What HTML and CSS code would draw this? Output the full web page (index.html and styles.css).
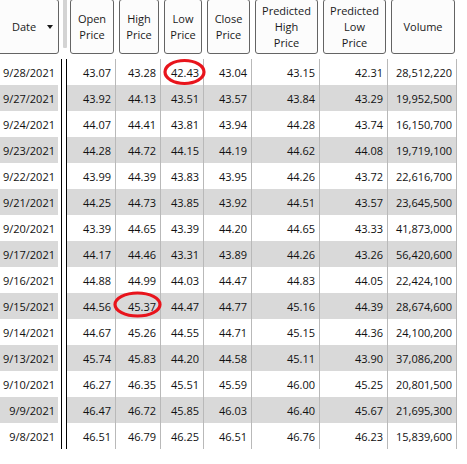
FILE: index.html
```html
<!DOCTYPE html>
<html>
<head>
<meta charset="utf-8">
<link rel="stylesheet" href="styles.css">
</head>
<body>
<div class="grid">
  <div class="header">
    <div class="hcell date-h"><div class="btn date-btn"><span>Date</span><span class="tri"></span></div></div>
    <div class="hcell split-h"><div class="splitter"></div></div>
    <div class="hcell"><div class="btn">Open<br>Price</div></div>
    <div class="hcell"><div class="btn">High<br>Price</div></div>
    <div class="hcell"><div class="btn">Low<br>Price</div></div>
    <div class="hcell"><div class="btn">Close<br>Price</div></div>
    <div class="hcell"><div class="btn">Predicted<br>High<br>Price</div></div>
    <div class="hcell"><div class="btn">Predicted<br>Low<br>Price</div></div>
    <div class="hcell"><div class="btn">Volume</div></div>
  </div>
  <div class="body">
    <div class="row"><div class="c d">9/28/2021</div><div class="sp"></div><div class="c">43.07</div><div class="c">43.28</div><div class="c">42.43</div><div class="c">43.04</div><div class="c">43.15</div><div class="c">42.31</div><div class="c">28,512,220</div></div>
    <div class="row alt"><div class="c d">9/27/2021</div><div class="sp"></div><div class="c">43.92</div><div class="c">44.13</div><div class="c">43.51</div><div class="c">43.57</div><div class="c">43.84</div><div class="c">43.29</div><div class="c">19,952,500</div></div>
    <div class="row"><div class="c d">9/24/2021</div><div class="sp"></div><div class="c">44.07</div><div class="c">44.41</div><div class="c">43.81</div><div class="c">43.94</div><div class="c">44.28</div><div class="c">43.74</div><div class="c">16,150,700</div></div>
    <div class="row alt"><div class="c d">9/23/2021</div><div class="sp"></div><div class="c">44.28</div><div class="c">44.72</div><div class="c">44.15</div><div class="c">44.19</div><div class="c">44.62</div><div class="c">44.08</div><div class="c">19,719,100</div></div>
    <div class="row"><div class="c d">9/22/2021</div><div class="sp"></div><div class="c">43.99</div><div class="c">44.39</div><div class="c">43.83</div><div class="c">43.95</div><div class="c">44.26</div><div class="c">43.72</div><div class="c">22,616,700</div></div>
    <div class="row alt"><div class="c d">9/21/2021</div><div class="sp"></div><div class="c">44.25</div><div class="c">44.73</div><div class="c">43.85</div><div class="c">43.92</div><div class="c">44.51</div><div class="c">43.57</div><div class="c">23,645,500</div></div>
    <div class="row"><div class="c d">9/20/2021</div><div class="sp"></div><div class="c">43.39</div><div class="c">44.65</div><div class="c">43.39</div><div class="c">44.20</div><div class="c">44.65</div><div class="c">43.33</div><div class="c">41,873,000</div></div>
    <div class="row alt"><div class="c d">9/17/2021</div><div class="sp"></div><div class="c">44.17</div><div class="c">44.46</div><div class="c">43.31</div><div class="c">43.89</div><div class="c">44.26</div><div class="c">43.26</div><div class="c">56,420,600</div></div>
    <div class="row"><div class="c d">9/16/2021</div><div class="sp"></div><div class="c">44.88</div><div class="c">44.99</div><div class="c">44.03</div><div class="c">44.47</div><div class="c">44.83</div><div class="c">44.05</div><div class="c">22,424,100</div></div>
    <div class="row alt"><div class="c d">9/15/2021</div><div class="sp"></div><div class="c">44.56</div><div class="c">45.37</div><div class="c">44.47</div><div class="c">44.77</div><div class="c">45.16</div><div class="c">44.39</div><div class="c">28,674,600</div></div>
    <div class="row"><div class="c d">9/14/2021</div><div class="sp"></div><div class="c">44.67</div><div class="c">45.26</div><div class="c">44.55</div><div class="c">44.71</div><div class="c">45.15</div><div class="c">44.36</div><div class="c">24,100,200</div></div>
    <div class="row alt"><div class="c d">9/13/2021</div><div class="sp"></div><div class="c">45.74</div><div class="c">45.83</div><div class="c">44.20</div><div class="c">44.58</div><div class="c">45.11</div><div class="c">43.90</div><div class="c">37,086,200</div></div>
    <div class="row"><div class="c d">9/10/2021</div><div class="sp"></div><div class="c">46.27</div><div class="c">46.35</div><div class="c">45.51</div><div class="c">45.59</div><div class="c">46.00</div><div class="c">45.25</div><div class="c">20,801,500</div></div>
    <div class="row alt"><div class="c d">9/9/2021</div><div class="sp"></div><div class="c">46.47</div><div class="c">46.72</div><div class="c">45.85</div><div class="c">46.03</div><div class="c">46.40</div><div class="c">45.67</div><div class="c">21,695,300</div></div>
    <div class="row"><div class="c d">9/8/2021</div><div class="sp"></div><div class="c">46.51</div><div class="c">46.79</div><div class="c">46.25</div><div class="c">46.51</div><div class="c">46.76</div><div class="c">46.23</div><div class="c">15,839,600</div></div>
  </div>
</div>
<svg class="marks" width="467" height="464" viewBox="0 0 467 464">
  <ellipse cx="184.5" cy="72" rx="19.5" ry="11.5" fill="none" stroke="#e8141c" stroke-width="3.2"/>
  <ellipse cx="137.5" cy="304.5" rx="22.5" ry="11.5" fill="none" stroke="#e8141c" stroke-width="3.2"/>
</svg>
</body>
</html>
```
FILE: styles.css
```css
html, body {
  margin: 0;
  padding: 0;
  background: #ffffff;
}
body {
  width: 467px;
  height: 464px;
  overflow: hidden;
  position: relative;
  font-family: "Open Sans", "Noto Sans", sans-serif;
  font-size: 11px;
  color: #111111;
}
.grid {
  width: 457px;
}
.header,
.row {
  display: grid;
  grid-template-columns: 58px 9px 49px 45px 43px 48px 68px 68px 69px;
}
.header {
  height: 54px;
  margin-bottom: 5px;
}
.hcell {
  display: flex;
  min-width: 0;
}
.btn {
  flex: 1;
  margin: -1px 2px 0 3px;
  height: 55px;
  box-sizing: border-box;
  border: 1px solid #646464;
  border-radius: 3px;
  background: #fcfcfc;
  display: flex;
  align-items: center;
  justify-content: center;
  text-align: center;
  line-height: 16px;
  padding-top: 1px;
  color: #1a1a1a;
  white-space: nowrap;
}
.date-btn {
  margin: -1px -1px 0 -4px;
  justify-content: flex-start;
  padding-left: 15px;
}
.tri {
  width: 0;
  height: 0;
  border-left: 3.5px solid transparent;
  border-right: 3.5px solid transparent;
  border-top: 4px solid #1a1a1a;
  margin-left: 11px;
  margin-top: -1px;
}
.split-h {
  padding-left: 5px;
}
.splitter {
  width: 4px;
  height: 48px;
  background: #d4d4d4;
  border-radius: 0 0 1px 1px;
}
.row {
  height: 26px;
}
.row.alt .c {
  background: #d9d9d9;
}
.c {
  box-sizing: border-box;
  border-right: 1px solid #b9b9b9;
  text-align: right;
  padding-right: 4px;
  line-height: 26px;
  padding-top: 1px;
  white-space: nowrap;
  overflow: hidden;
}
.c.d {
  border-right: none;
  padding-right: 3px;
}
.sp {
  background: linear-gradient(to right, #fff 3px, #000 3px, #000 4px, #fff 4px, #fff 8px, #000 8px);
}
.marks {
  position: absolute;
  left: 0;
  top: 0;
  pointer-events: none;
}
```
